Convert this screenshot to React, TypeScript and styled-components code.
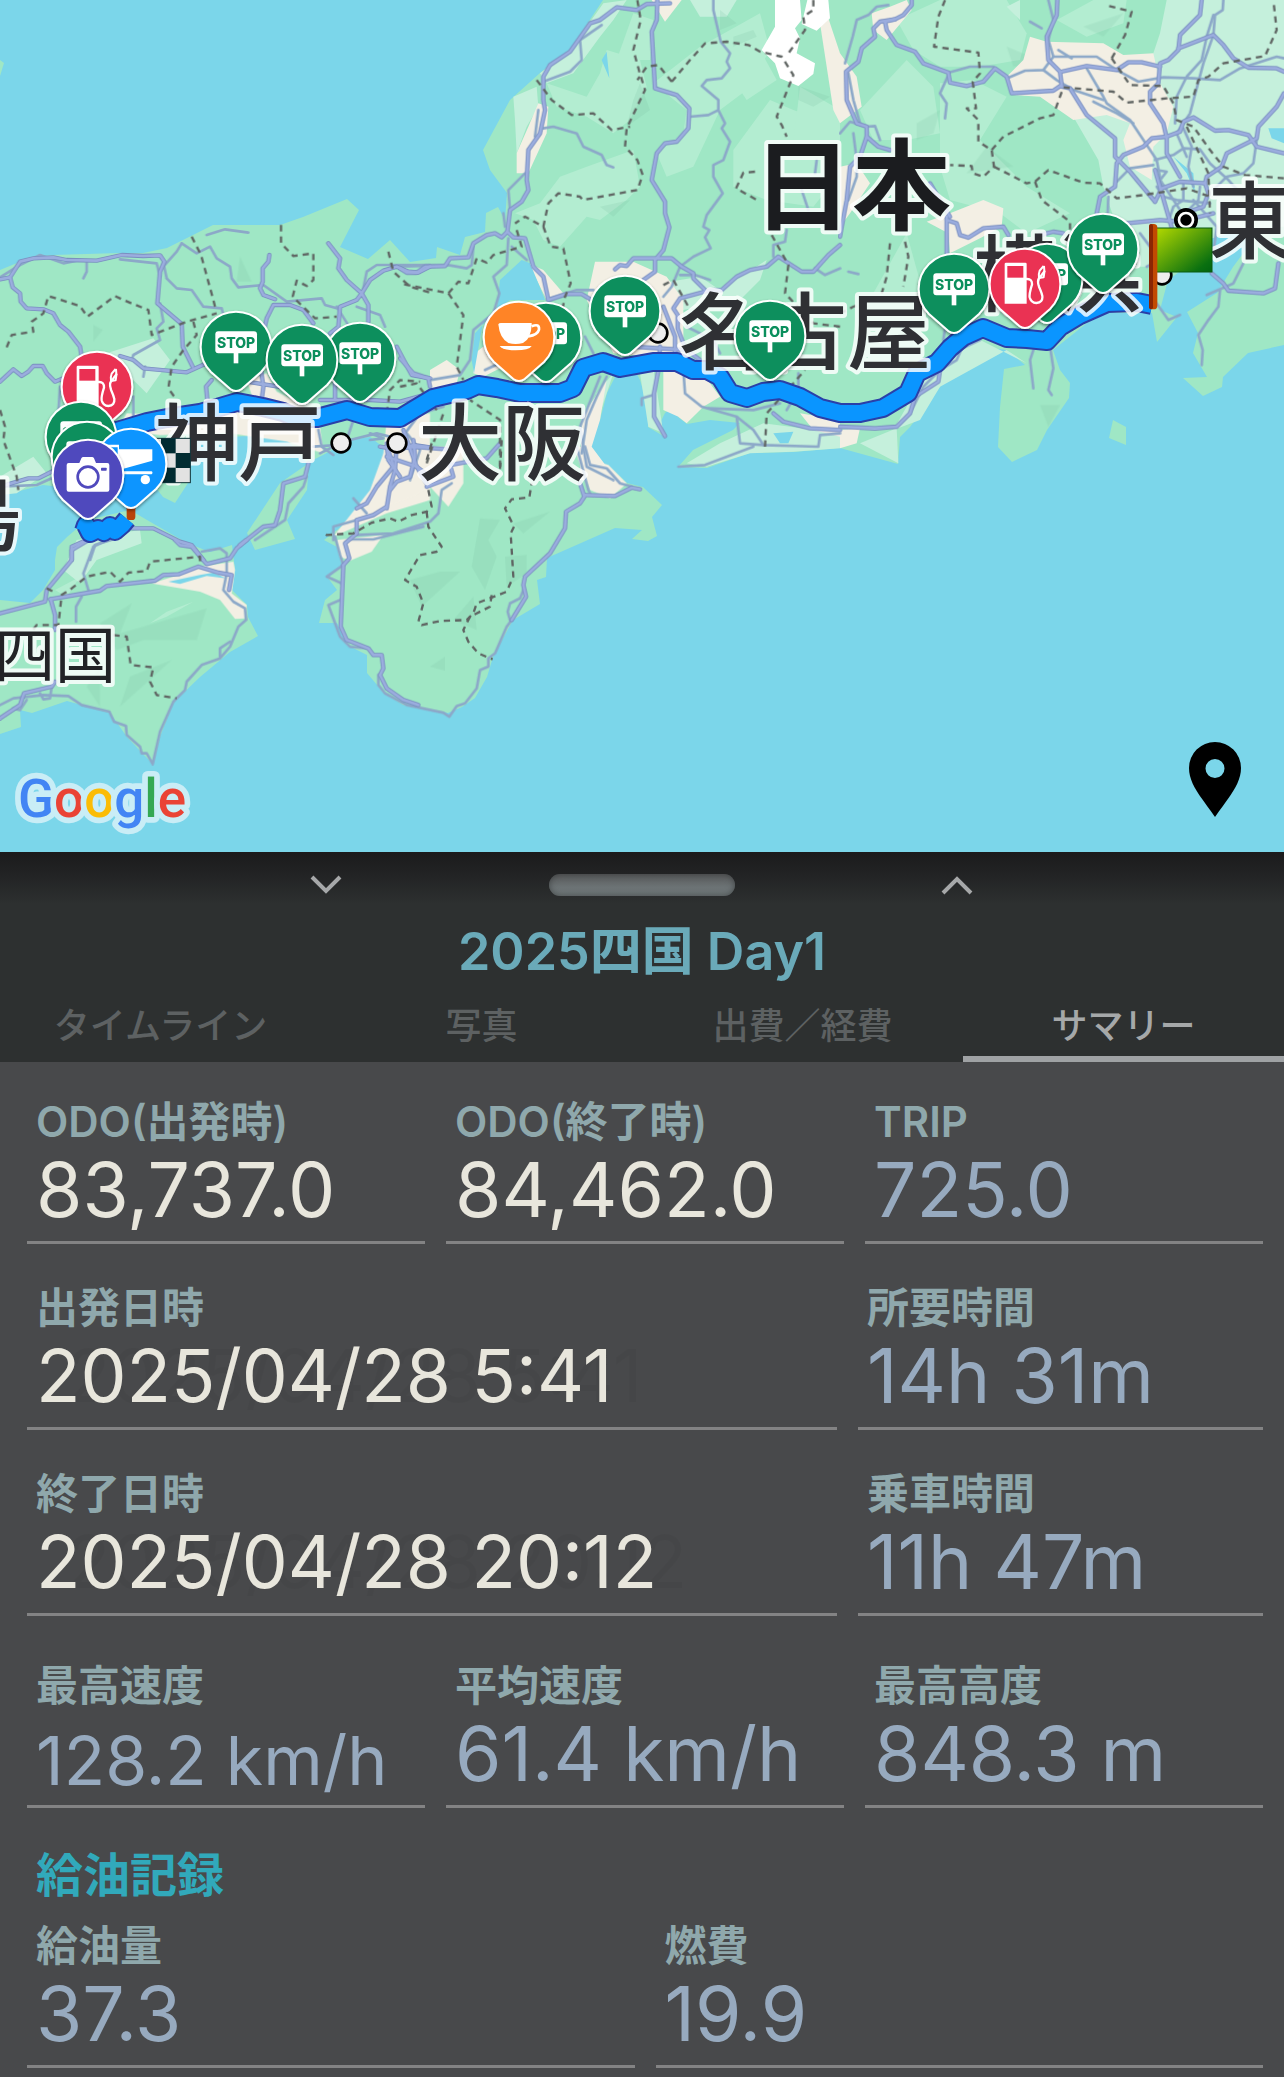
import React, { useState } from 'react';
import styled, { createGlobalStyle } from 'styled-components';

const FONT = `Inter, "Noto Sans CJK JP", sans-serif`;

const GlobalStyle = createGlobalStyle`
  * { box-sizing: border-box; }
  body { margin: 0; background: #48494b; font-family: ${FONT}; }
  button, input { font: inherit; color: inherit; border: 0; background: none; padding: 0; margin: 0; }
`;

/* ---------- map data: each sheet lists its lines in its own coordinates ---------- */

type Sheet = {
  x: number;
  y: number;
  hill?: string[];
  shade?: string[];
  pale?: string[];
  urban?: string[];
  snow?: string[];
  water?: string[];
  major: string[];
  minor: string[];
  border: string[];
};

const sheets: Sheet[] = [
  {
    x: 0,
    y: 600,
    pale: ['320,460 460,415 510,480 440,580 360,500', '0,830 100,770 140,820 50,880 0,885', '190,1110 230,1020 420,990 425,1030 290,1080 240,1150'],
    shade: ['720,170 755,245 710,245', '280,375 308,390 280,425'],
    urban: ['740,540 800,520 830,575 900,610 960,680 970,760 860,725 690,700 480,705 350,690 380,640 640,650 760,600', '1160,660 1290,640 1290,900 1160,940 1000,1010 1110,870 1150,760'],
    major: [
      '0,238 30,232 60,185 100,175 160,172 200,180 290,182 365,165 430,168 480,166 493,185 480,215 472,310 545,372 548,440 578,500',
      '30,232 38,262 60,280 62,305 80,325 130,328 160,340 180,375 205,395 240,440 245,470',
      '0,545 40,508 65,528 85,515 100,498 128,498 140,520 165,545 190,535',
      '360,468 400,480 430,505 560,517 620,490',
      '808,165 805,185 788,205 788,245 780,265 790,285 825,298',
      '985,130 1020,175 1015,205 1040,240 1085,280 1105,315 1105,365',
      '1290,200 1255,218 1225,215 1190,200 1150,212 1110,240 1085,280 1070,300 1020,320 1015,380 990,400',
      '940,370 910,330 870,315 820,315 800,355 790,400',
      '0,860 85,835 115,835 165,810',
      '395,985 460,985 540,1025 575,1035 610,1080',
      '265,1018 215,1040 215,1080',
      '635,540 618,560 622,600',
      '780,490 790,560 785,600',
      '740,545 900,570',
      '1190,440 1235,525 1290,535',
      '1290,580 1200,605 1110,600 960,600',
      '1140,740 1200,750 1240,735 1290,742',
      '1160,730 1165,780 1200,830',
      '1210,690 1250,800 1290,830',
      '1005,520 1005,600',
    ],
    minor: [
      '250,235 260,215 260,182',
      '480,230 470,190 360,178',
      '0,232 60,195 120,165 190,190 230,182',
      '490,200 530,155 545,130',
      '500,235 530,265 575,270 610,320 665,325 670,345',
      '490,190 500,235',
      '545,130 590,160 630,140 650,175 690,200 695,235 715,262 790,255 860,305 965,295 975,315 1010,325',
      '620,105 675,88 745,98',
      '480,310 490,365 470,385 480,420 400,465 395,480',
      '435,500 430,530',
      '1085,290 1100,215 1130,195 1290,195',
      '1070,320 1140,345 1155,380',
      '1010,320 1060,400',
      '0,860 110,855 165,830',
      '940,740 1010,735',
      '960,760 1040,720 1060,660',
      '1050,720 1130,700 1210,720',
      '1110,700 1150,715 1110,720',
      '955,690 965,740 1000,765',
      '270,1080 285,1035 350,1015',
      '400,590 400,650',
      '175,640 180,560',
    ],
    border: [
      '575,110 603,165 640,300 645,320',
      '843,75 843,130 880,168 940,160 940,240 920,258 890,242 878,290 945,355 1010,350',
      '20,442 35,405 100,395 95,365 130,340 145,288 240,318 262,350 345,288 370,300 445,330 455,405 560,365 650,340',
      '580,365 590,405 550,450 515,500 505,565 530,600',
      '0,630 15,680 10,720 50,830 55,870',
      '1165,155 1180,215 1230,260 1290,278',
      '1160,640 1170,570 1200,540 1260,545',
    ],
  },
  {
    x: 1200,
    y: 0,
    hill: [
      '345,640 420,610 480,530 560,500 700,450 720,560 680,600 600,660 560,650 480,740 430,720 400,660',
      '440,250 560,290 600,220 620,150 720,180 740,260 690,360 640,400 560,350 470,320',
      '760,250 900,140 1080,40 1110,150 1040,270 960,330 880,500 800,530 770,460 850,400 860,330',
      '700,40 760,60 750,180 650,180',
      '1000,450 1110,300 1180,330 1320,380 1320,520 1240,620 1100,600 1000,560',
      '1200,260 1320,330 1320,420 1180,430',
      '960,180 1080,150 1130,240 1040,300',
    ],
    shade: ['720,250 750,330 680,380 700,300', '1000,110 1060,90 1070,110 1000,140', '1195,258 1290,290 1240,320 1195,300', '600,620 690,600 640,650', '960,30 1010,70 960,90'],
    pale: [
      '420,220 510,150 610,10 680,0 640,60 600,110 520,220 440,250',
      '340,290 410,260 415,320 380,380 350,460 345,360',
      '780,850 900,830 960,870 1100,780 1080,840 990,930 900,920 800,940',
      '870,0 1010,0 980,50 900,50',
      '860,1390 960,1330 1090,1270 1320,1300 1320,1345 1180,1355 1050,1360 920,1400',
      '720,1120 760,1100 790,1300 745,1280',
      '590,1180 640,1120 600,1240 560,1300',
    ],
    urban: [
      '415,310 445,320 440,400 385,520 350,520 350,460 385,380',
      '585,785 700,785 800,830 850,900 850,1040 870,1080 640,1060 560,900',
      '385,790 430,810 490,880 440,900',
      '90,1110 140,1080 180,1110 170,1150 100,1180 90,1150',
      '225,1060 300,1000 330,1090 250,1130 220,1120',
      '790,1090 900,1110 960,1190 910,1220 860,1270 835,1250 790,1230',
      '1200,1240 1320,1260 1320,1310 1240,1290',
      '1260,70 1285,55 1320,160 1320,370 1300,330',
      '755,0 845,0 795,65',
      '545,1250 620,1140 600,1260 575,1340 620,1400 650,1440 540,1440',
    ],
    snow: ['1125,0 1200,0 1205,60 1185,85 1200,115 1190,160 1245,190 1240,222 1195,258 1140,235 1125,190 1085,150 1125,80', '1222,0 1285,0 1290,55 1250,92 1205,72'],
    water: ['365,780 390,790 415,850 435,900 330,900 250,960 222,1120 215,1080 225,1000 290,930 300,840', '605,180 620,155 628,235', '1120,1300 1180,1295 1165,1330 1140,1330'],
    major: [
      '810,10 740,12 710,30 650,22 600,60 570,70 510,155 450,195 430,230 430,300 435,330 420,400 385,450 380,540 385,570 365,605 330,630 322,695',
      '322,695 305,712 285,700 260,705 220,730 205,772 150,775 135,798 75,800 50,818 20,818 0,805',
      '322,695 340,712 375,715 400,800 430,830 445,900',
      '445,900 500,882 545,882 575,900',
      '772,0 770,60 755,95 765,265 830,285 868,325 865,385 830,425 795,430 770,460 755,540 795,605 795,640 808,682 790,750 765,780 765,815 730,840',
      '645,808 660,795 680,798 700,775 815,775 845,800 880,820 880,835 915,870',
      '1320,735 1285,765 1240,815 1205,815 1135,770 1100,800 1050,810 1010,830 965,870 925,872 840,895 820,925 833,945 833,985 850,1030',
      '825,1060 825,1010 790,920',
      '780,1040 775,1110 762,1180 762,1250 795,1308',
      '0,1075 40,1120 85,1135 90,1160',
      '1120,1240 1150,1265 1230,1285 1320,1290',
      '700,1040 860,1050 900,1080',
    ],
    minor: [
      '430,245 510,215 545,180 540,120 605,75',
      '430,385 460,380 530,400 550,440 605,465 620,495 640,502',
      '870,350 925,345 955,330 955,300 905,258 920,240 965,235 990,205 980,185 990,160 962,125 940,30 940,0',
      '955,330 975,370 965,385 990,425 970,480 940,495 940,530 968,580 920,645 910,680 928,690 915,712 932,745 880,770 840,800 815,860 790,890',
      '375,520 325,570 330,630',
      '405,410 415,330',
      '310,640 315,680',
      '325,715 320,795 280,830 298,880 280,940 220,990 210,1080 180,1125 90,1140',
      '335,740 380,780',
      '220,740 215,795 200,805 145,795 0,800',
      '840,825 885,825 930,840',
      '1195,1120 1195,1170 1160,1230',
      '850,1110 855,1180 905,1220 1010,1250 1060,1290 1090,1335 1255,1340 1260,1305 1320,1300',
      '925,1225 1060,1230 1140,1210',
      '835,1400 915,1395 1060,1340',
      '1010,1250 1020,1330 1090,1335',
      '1250,480 1245,520',
      '1205,570 1225,630',
      '1160,690 1155,725 1120,735 1120,770',
      '1320,805 1275,825 1245,805',
      '725,1215 725,1195 760,1185',
      '555,1010 580,1060',
      '450,895 530,870 580,870',
      '255,1110 320,1080',
      '620,1130 590,1190 560,1260 545,1360',
      '600,1130 540,1280 560,1400 640,1440',
      '860,980 940,1020 960,1060',
      '0,1320 60,1240 130,1220',
      '20,1300 60,1350 30,1440',
    ],
    border: [
      '712,0 722,60 700,150 718,215 735,270 680,385 675,440 712,480 728,525 712,570 548,600 540,590 475,580 445,610 430,680 375,650 345,670',
      '410,240 455,300 515,345 580,340 635,390 690,380',
      '430,680 452,740 490,745 512,850 495,890 480,960',
      '815,245 775,195 740,200 712,240',
      '815,245 870,180 915,130 980,125 1045,135 1080,155 1145,170 1180,225 1150,300 1130,350 1145,375 1160,410',
      '1240,0 1240,30 1210,50 1215,90 1165,160',
      '1065,515 1030,518 1008,565 1080,605',
      '1115,705 1165,795 1155,880 1240,970 1320,980',
      '350,690 365,740 280,765 260,788 230,775 205,850 175,845 145,880 0,850',
      '145,880 190,945 170,1100 190,1140',
      '790,855 820,840 865,920',
      '1095,1340 1100,1240 1215,1110',
      '300,1400 300,1260 210,1200',
      '80,1390 130,1240',
      '0,1160 50,1150 110,1230',
    ],
  },
  {
    x: 2520,
    y: 0,
    hill: [
      '170,60 300,0 500,0 560,100 540,180 420,200 300,200 220,150',
      '300,250 400,240 500,290 420,420 560,560 690,640 560,700 480,640 330,600 300,500',
      '60,330 200,180 280,260 300,400 200,420 100,420',
      '650,60 760,0 860,0 850,70 740,110',
      '100,880 200,700 250,880',
    ],
    shade: ['230,370 300,330 280,400 230,420', '500,140 620,190 520,200', '600,1215 660,1215 625,1280', '730,80 850,40 790,110', '440,440 520,500 380,520'],
    pale: ['980,0 1332,0 1332,680 1200,690 1100,720 1080,800 900,800 820,650 790,560 775,480 700,350 850,340 940,160 960,100', '60,1330 170,1285 175,1390', '380,1000 560,1090 500,1050 300,1160 240,1260 160,1290 240,1150', '500,20 540,0 540,60'],
    urban: [
      '570,110 620,125 790,130 850,165 940,160 960,250 1000,320 980,400 940,440 935,540 870,500 850,420 870,370 800,345 700,360 600,290 520,285 500,230 550,180',
      '150,20 200,0 215,30 190,60 140,120 100,90 95,40',
      '0,160 50,230 65,320 0,370',
      '260,665 330,640 430,600 490,625 485,680 420,715 330,760 325,700',
      '0,500 50,490 90,550 30,640 0,680',
      '0,1290 60,1285 50,1330 0,1345',
    ],
    water: ['1285,385 1332,385 1332,430 1295,415', '1000,470 1040,520 1065,580 1060,520'],
    major: [
      '215,0 215,15 190,45 165,58 135,65 140,90 170,135 225,155 250,190 325,218 330,248 380,258 430,245 465,205 500,230 515,280 640,272 665,255 660,215 625,180 620,110 650,45 652,0',
      '165,58 120,65 100,85 105,110 65,145 55,185 18,215 20,300 50,370 80,380 80,410 60,470 30,500 20,600 5,680 0,710',
      '80,410 115,440 150,450',
      '665,215 740,198 830,210 865,187 905,187 960,200',
      '665,260 690,265 740,345 825,415 825,470 870,515 945,605',
      '1085,0 1080,45 1020,105 1015,150 985,180 960,190 955,250 930,275 930,310 970,370 978,405',
      '1015,145 1120,105 1150,135 1180,175 1225,203 1310,205 1332,215',
      '1332,280 1310,320 1255,380 1250,415 1160,460 1145,500 1100,530 1095,550',
      '1332,460 1250,440 1225,405 1165,390 1125,392 1060,352 1030,365 1020,395 980,410 935,415 910,440 850,465 830,490 825,560 780,590 770,640',
      '980,410 980,460 1020,530',
      '945,605 965,565 1020,545 1095,550 1105,580 1090,620 1030,640',
      '1115,820 1150,850 1165,872 1270,880 1305,865 1315,790',
      '860,670 960,660 1020,665 1120,640',
      '320,660 350,670 360,705 385,713 430,685 490,680 505,705',
      '320,650 320,760',
      '600,705 640,695 670,700',
      '0,1280 105,1285 170,1280 210,1240 225,1190 295,1145 300,1110',
      '945,510 1000,700 960,760',
      '270,550 330,650',
    ],
    minor: [
      '145,15 110,20 85,45 50,60 38,110 15,190',
      '0,400 30,365 80,380 105,378 120,420',
      '40,400 50,480 50,530 25,600',
      '25,220 40,300 60,370',
      '325,218 390,200 460,200',
      '325,225 300,280 320,310 315,355',
      '500,235 555,212 610,210 640,170 770,170 830,210 895,245 970,232 1060,235 1140,240 1200,205 1310,170 1332,175',
      '610,210 650,240 700,270 790,300',
      '740,205 790,290 800,310 870,360 950,480 965,560',
      '570,65 605,85',
      '625,0 640,60 625,120 640,170',
      '655,150 695,175',
      '1150,0 1148,30 1125,45 1120,105 1090,190 1050,340 1010,400 1040,470',
      '1120,45 1100,110 1085,180 1040,230 1010,290 1005,370',
      '760,305 830,340 880,370',
      '1030,385 1055,440 1045,500 1060,560',
      '945,480 1000,465 1030,445 1080,448 1110,490 1165,540 1210,590',
      '1250,420 1240,490 1210,520 1160,530 1120,570',
      '1080,560 1075,600 1035,640',
      '830,545 870,505 940,495',
      '805,590 803,640',
      '1030,550 1030,600 1000,620 990,650',
      '950,560 970,590 1010,600 1110,610',
      '950,510 980,515 960,540 1000,600 1040,660',
      '1060,600 1130,680 1120,760',
      '1140,870 1135,920 1105,960 1075,1005 1088,1050 1085,1095',
      '1210,790 1180,850 1100,885',
      '950,910 985,960 1020,945',
      '900,700 960,780 920,800',
      '580,1050 570,1080 580,1165',
      '630,1040 640,1105 625,1170 635,1185',
      '420,1020 365,1045 350,1080 300,1110 250,1160 210,1240',
      '25,815 55,822',
      '320,950 310,1020',
    ],
    border: [
      '315,0 295,50 282,140 415,158 420,220 398,245 405,300 408,325 380,325 415,360 415,425 455,450 462,500 430,530 398,520 395,498 330,495',
      '455,450 490,410 600,355 640,345 670,262 820,275 860,308 980,295 1060,290 1075,240 1105,230 1150,190 1275,168 1310,90 1300,0',
      '815,175 855,105 875,35 795,15',
      '815,175 870,255 970,258 1000,310 1010,360 1060,380 1110,450 1150,500 1215,525 1332,535',
      '462,500 560,550 585,545 625,510 730,548 780,550 830,595 910,585 1040,565 1110,590',
      '585,545 605,600 690,665 690,690',
      '150,730 140,830 125,880',
      '195,725 205,770 190,860',
      '1040,380 1105,520 1110,640',
      '0,940 40,920 100,900',
    ],
  },
  {
    x: 0,
    y: 1620,
    hill: ['450,250 500,215 580,185 500,230', '165,150 240,110 200,170'],
    shade: ['300,250 395,190 360,280 620,205 590,300 430,300 350,330', '360,500 390,410 515,360', '260,440 300,380 300,500'],
    urban: ['455,130 540,103 600,80 700,65 705,90 695,160 740,195 735,235 705,237 660,180 600,155'],
    water: ['505,125 600,105 640,98 680,115 620,108 540,132'],
    major: [
      '265,0 215,30 215,60 140,150 135,185 0,220',
      '150,178 300,152 320,138 465,122 490,105 535,103 595,80 655,98 695,105 687,150',
      '152,178 165,225 165,270',
      '525,0 540,15 575,20 620,72 690,55 710,25 740,0',
      '0,535 60,495 72,460 155,440 165,425',
    ],
    minor: [
      '320,0 280,20 250,100 265,150',
      '245,170 228,200 228,245',
      '605,35 660,25 680,40 680,100 670,150 700,185 735,205 738,240 715,260 690,320 660,355 605,375 560,425 555,450 520,485 480,575 458,672 440,640 425,640 420,620 380,585 378,558 342,545 328,515 245,495 205,468 130,465 40,475 0,495',
      '660,350 660,325 690,305',
      '155,440 150,475 130,478 120,460',
      '80,480 60,510 40,505',
    ],
    border: [
      '100,268 110,255 175,255 185,165 215,145 260,110 330,95 360,125 385,98 440,93 450,65 600,50 600,75',
      '140,145 160,155',
      '340,285 380,290 392,375 460,382 450,425 470,465 530,475',
    ],
  },
  {
    x: 720,
    y: 1320,
    shade: ['720,235 780,240 745,300 770,350 735,450 695,380', '795,350 860,345 860,400 800,440', '510,420 600,395 660,395 545,500', '640,540 700,470 710,570', '570,680 615,650 615,692', '820,250 930,215 850,280'],
    urban: ['440,20 670,20 670,130 625,200 570,140 520,170 440,200 330,240 400,160 430,90', '290,300 430,285 395,335 330,362 300,350', '1050,60 1105,75 1160,130 1110,175 1050,150 1000,20 1050,20'],
    major: [
      '0,315 70,260 105,255 120,210 130,130 195,110 205,70',
      '310,375 328,355 315,310 350,280 350,240 400,225 440,200',
      '310,375 302,560 320,600 385,625 400,645 425,645 430,685 420,705 440,745 490,780 535,795',
      '1020,130 1033,170 1020,190 978,215 975,265 930,340 855,410 850,435 858,470 815,540',
      '1033,165 1125,168 1175,143 1200,148',
      '440,20 455,60 460,80 410,140 380,190 350,205',
      '468,40 465,90 450,140 440,205',
      '520,0 525,50 510,110 470,125 450,150',
      '440,20 540,22 620,28',
      '780,10 740,55 630,75 640,110 560,140',
      '440,50 530,80 560,130',
    ],
    minor: [
      '340,175 380,220',
      '280,300 280,260 350,240',
      '285,290 300,345 310,375',
      '350,285 460,280 570,245 595,220 605,150 635,130',
      '330,298 400,298 550,260',
      '310,375 260,410 305,430',
      '300,480 265,495 300,590 330,620 385,625',
      '415,705 415,735 435,760 500,795 610,818 628,830 650,798 675,790 710,745 720,690 745,680 745,655 765,640 800,560 815,540',
      '850,450 840,475 810,490 803,515 810,540',
      '1035,20 1050,75 1100,85 1140,130 1175,140',
      '1010,20 1045,150 1050,160',
      '200,110 190,140 145,190 135,240 45,300',
    ],
    border: [
      '565,150 575,200 560,215 515,225 475,245 450,235 395,248 340,280 260,285 250,275',
      '560,215 565,260 605,320 590,335 540,345 495,420 530,440 550,490 535,545 545,555 600,543 680,540 700,520 710,490 800,455 820,410 812,280 822,260 795,205 815,178 868,172 875,130',
      '755,465 750,500 690,530 670,570 685,605 715,640 758,658',
      '575,10 560,60',
      '785,0 780,90',
    ],
  },
];

const land = [
  '0,270 17,263 30,257 53,255 120,253 143,253 167,248 213,225 280,225 303,217 347,199 359,210 340,247 368,259 390,240 410,262 436,258 437,247 460,255 465,237 485,232 486,213 498,207 505,220 507,193 490,170 483,150 510,100 540,73 570,50 603,0 1284,0 1284,345 1248,353 1223,377 1222,387 1203,396 1183,378 1207,377 1193,353 1198,333 1187,312 1217,293 1233,267 1253,240 1240,232 1213,233 1200,257 1168,280 1160,310 1177,317 1157,342 1152,313 1107,313 1087,323 1053,350 1060,370 1070,383 1069,398 1047,430 1037,450 1012,462 998,447 1000,407 1004,369 1025,365 1007,350 983,347 957,363 940,387 910,427 900,437 898,464 840,448 793,452 750,453 707,468 678,467 693,450 733,430 740,423 710,420 687,424 678,417 677,403 665,413 660,423 665,437 648,427 648,407 640,380 633,367 617,373 607,393 600,420 590,437 590,460 608,465 627,483 643,487 662,505 652,517 657,536 648,541 632,539 642,530 615,528 547,558 546,577 537,580 540,604 513,620 493,657 487,677 475,698 462,707 448,713 403,705 383,692 367,673 367,655 347,645 337,623 319,623 325,600 337,590 328,578 342,565 337,547 324,540 350,520 373,493 383,470 387,457 383,447 370,437 350,440 323,455 307,463 287,440 263,435 230,437 190,440 190,480 175,503 163,497 150,480 120,500 90,490 43,485 0,496',
  '55,560 57,547 67,537 87,520 130,510 147,520 187,543 210,552 232,545 235,570 232,590 247,605 248,617 258,636 230,652 200,677 173,703 160,737 153,764 142,753 127,737 110,713 67,701 32,713 20,710 21,727 0,734 0,600 30,603 43,590 55,570',
  '309,463 280,483 247,533 255,550 295,539 287,520 307,490',
  '1113,420 1126,427 1126,445 1109,438',
  '0,60 4,63 0,76',
];

const route = [
  '1152,305 1137,302 1107,303 1080,315 1060,327 1047,341 1027,339 1007,338 983,328 963,337 950,348 937,363 917,373 908,393 883,408 860,413 840,413 820,408 800,397 780,390 763,392 747,398 730,393 720,377 707,370 693,370 677,362 653,362 620,368 603,362 583,368 573,388 560,393 520,393 497,388 478,385 467,390 433,398 413,410 400,418 370,417 347,410 317,418 297,418 283,412 263,407 237,402 220,407 200,413 167,418 147,422 127,428 110,433 90,450',
  '127,519 122,525 115,531 110,526 104,532 98,529 90,533 86,525 84,531',
];

/* ---------- map drawing ---------- */

const MapArea = styled.section`
  position: relative;
  background: #7bd6ea;
`;

const MapSvg = styled.svg`
  display: block;
  width: 100%;
  height: auto;
`;

const LocateButton = styled.button`
  position: absolute;
  right: 43px;
  bottom: 35px;
  width: 52px;
  height: 75px;
  cursor: pointer;
  svg { display: block; width: 100%; height: 100%; }
`;

type AreaKey = 'hill' | 'shade' | 'pale' | 'urban' | 'snow' | 'water';

const Areas = ({ of, fill, opacity = 1 }: { of: AreaKey; fill: string; opacity?: number }) => (
  <g fill={fill} opacity={opacity}>
    {sheets.map((s, i) => (
      <g key={i} transform={`translate(${s.x} ${s.y})`}>
        {(s[of] ?? []).map((p) => <polygon key={p} points={p} />)}
      </g>
    ))}
  </g>
);

const Lines = ({ of, stroke, width, dash }: { of: 'major' | 'minor' | 'border'; stroke: string; width: number; dash?: string }) => (
  <g fill="none" stroke={stroke} strokeWidth={width} strokeLinejoin="round" strokeLinecap={dash ? 'butt' : 'round'} strokeDasharray={dash}>
    {sheets.map((s, i) => (
      <g key={i} transform={`translate(${s.x} ${s.y})`}>
        {s[of].map((p) => <polyline key={p} points={p} />)}
      </g>
    ))}
  </g>
);

const PlaceLabel = ({ x, y, size = 84, weight = 500, color = '#2f3034', children }: { x: number; y: number; size?: number; weight?: number; color?: string; children: string }) => (
  <text
    x={x * 3}
    y={y * 3}
    fontSize={size * 3}
    fontWeight={weight}
    fontFamily='"Noto Sans CJK JP", sans-serif'
    fill={color}
    stroke="rgba(255,255,255,0.82)"
    strokeWidth={24}
    strokeLinejoin="round"
    paintOrder="stroke"
  >
    {children}
  </text>
);

const CityDot = ({ x, y }: { x: number; y: number }) => (
  <circle cx={x * 3} cy={y * 3} r={28} fill="#eeeeee" stroke="#000" strokeWidth={8} />
);

type PinKind = 'stop' | 'fuel' | 'cafe' | 'camera' | 'cart';

const pinColor: Record<PinKind, string> = {
  stop: '#0b8f5d',
  fuel: '#ea3053',
  cafe: '#ff8427',
  camera: '#5049bd',
  cart: '#0a95ff',
};

const glyphs: Record<PinKind, React.ReactNode> = {
  stop: (
    <>
      <rect x={-62} y={-47} width={125} height={66} rx={9} fill="#fff" />
      <rect x={-7} y={15} width={14} height={34} fill="#fff" />
      <text x={0} y={2} textAnchor="middle" fontSize={42} fontWeight={800} fontFamily="Inter, sans-serif" fill="#0b8f5d">STOP</text>
    </>
  ),
  fuel: (
    <>
      <path d="M-61 59V-60q0-4 4-4H1q4 0 4 4V59Z" fill="#fff" />
      <rect x={-53} y={-54} width={48} height={35} fill="#ea3053" />
      <path d="M5-15Q22-16 21 2Q12 30 14 40Q18 57 34 57Q54 56 52 36Q50 26 42 8Q34-14 48-24L58-38" fill="none" stroke="#fff" strokeWidth={7} strokeLinecap="round" />
      <path d="M56-54L44-40Q40-30 42-18L56-20Q60-36 57-54" fill="none" stroke="#fff" strokeWidth={6} strokeLinejoin="round" />
    </>
  ),
  cafe: (
    <>
      <path d="M-62-38Q-60-42-54-42H38V-36Q36 6 12 18Q-10 24-32 18Q-58 4-62-38Z" fill="#fff" />
      <path d="M38-32Q62-42 60-22Q56-6 28-2" fill="none" stroke="#fff" strokeWidth={8} />
      <path d="M-58 27H38Q30 40-10 40Q-48 40-58 27Z" fill="#fff" />
    </>
  ),
  camera: (
    <>
      <path d="M-64-30q0-6 6-6h32l6-14q2-4 6-4H12q4 0 6 4l6 14H58q6 0 6 6V44q0 6-6 6H-58q-6 0-6-6Z" fill="#fff" />
      <circle cx={0} cy={6} r={31} fill="#fff" stroke="#5049bd" strokeWidth={8} />
      <rect x={39} y={-22} width={17} height={9} rx={2} fill="#5049bd" />
    </>
  ),
  cart: (
    <>
      <path d="M-90-58H-36V-44H64V-10L-28 16L-40-20V-50H-90Z" fill="#fff" />
      <rect x={-50} y={22} width={114} height={9} rx={3} fill="#fff" />
      <circle cx={43} cy={47} r={14} fill="#fff" />
    </>
  ),
};

const Pin = ({ kind, x, y }: { kind: PinKind; x: number; y: number }) => (
  <g transform={`translate(${x * 3} ${y * 3})`}>
    <path
      d="M0 132Q-9 132-17 126L-75 75A106 106 0 1 1 75 75L17 126Q9 132 0 132Z"
      fill={pinColor[kind]}
      stroke="#fff"
      strokeWidth={6}
      filter="url(#pinShadow)"
    />
    {glyphs[kind]}
  </g>
);

const pins: { kind: PinKind; x: number; y: number }[] = [
  { kind: 'stop', x: 236, y: 347 },
  { kind: 'stop', x: 360, y: 358 },
  { kind: 'stop', x: 302, y: 360 },
  { kind: 'fuel', x: 97, y: 387 },
  { kind: 'stop', x: 81, y: 437 },
  { kind: 'stop', x: 87, y: 457 },
  { kind: 'cart', x: 131, y: 464 },
  { kind: 'camera', x: 88, y: 475 },
  { kind: 'stop', x: 546, y: 338 },
  { kind: 'cafe', x: 519, y: 337 },
  { kind: 'stop', x: 625, y: 311 },
  { kind: 'stop', x: 770, y: 336 },
  { kind: 'stop', x: 954, y: 289 },
  { kind: 'stop', x: 1047, y: 279 },
  { kind: 'fuel', x: 1025, y: 284 },
  { kind: 'stop', x: 1103, y: 249 },
];

const StartFlag = () => (
  <g>
    <rect x={3468} y={684} width={168} height={132} fill="url(#flag)" stroke="#0a5a10" strokeWidth={3} />
    <rect x={3447} y={672} width={25} height={256} rx={11} fill="#c24a02" />
    <rect x={3447} y={672} width={12} height={256} rx={6} fill="#8a2604" />
  </g>
);

const GoalFlag = () => (
  <g>
    <rect x={380} y={1310} width={26} height={250} rx={10} fill="#b8430a" />
    <rect x={395} y={1315} width={176} height={133} fill="#e2e2e2" stroke="#0c3237" strokeWidth={3} />
    {[0, 1, 2].flatMap((row) =>
      [0, 1, 2, 3]
        .filter((col) => (row + col) % 2 === 0)
        .map((col) => <rect key={`${row}${col}`} x={395 + col * 44} y={1315 + row * 44} width={44} height={45} fill="#012b31" />),
    )}
  </g>
);

const GOOGLE: [string, string][] = [
  ['G', '#4285f4'],
  ['o', '#ea4335'],
  ['o', '#fbbc05'],
  ['g', '#4285f4'],
  ['l', '#34a853'],
  ['e', '#ea4335'],
];

const RouteMap = () => (
  <MapArea aria-label="地図">
    <MapSvg viewBox="0 0 3852 2556" role="img">
      <defs>
        <filter id="pinShadow" x="-20%" y="-20%" width="140%" height="140%">
          <feDropShadow dx="0" dy="5" stdDeviation="5" floodColor="#000" floodOpacity="0.45" />
        </filter>
        <linearGradient id="flag" x1="0" y1="0" x2="1" y2="1">
          <stop offset="0" stopColor="#b4d900" />
          <stop offset="0.85" stopColor="#0a7010" />
          <stop offset="1" stopColor="#006410" />
        </linearGradient>
      </defs>
      <rect width={3852} height={2556} fill="#7bd6ea" />
      <g transform="scale(3)" fill="#9fe7c5">
        {land.map((p) => <polygon key={p} points={p} />)}
      </g>
      <Areas of="hill" fill="#b3edd1" />
      <Areas of="pale" fill="#c5f0dc" />
      <Areas of="shade" fill="#7fc4a6" opacity={0.2} />
      <Areas of="urban" fill="#f3efe4" />
      <Areas of="snow" fill="#ffffff" />
      <Areas of="water" fill="#7bd6ea" />
      <Lines of="minor" stroke="#8ca8c8" width={8} />
      <Lines of="major" stroke="#7a8fc0" width={13} />
      <Lines of="major" stroke="#9badde" width={8} />
      <Lines of="border" stroke="#5f6462" width={7} dash="19 15" />
      <g transform="scale(3)" fill="none" strokeLinejoin="round">
        {route.map((p) => <polyline key={p} points={p} stroke="#2a3fa8" strokeWidth={20} />)}
        {route.map((p) => <polyline key={p} points={p} stroke="#0a95ff" strokeWidth={16} />)}
      </g>
      <CityDot x={341} y={443} />
      <CityDot x={397} y={443} />
      <CityDot x={658} y={333} />
      <CityDot x={1162} y={275} />
      <g>
        <circle cx={3558} cy={660} r={36} fill="#000" />
        <circle cx={3558} cy={660} r={25} fill="#fff" />
        <circle cx={3558} cy={660} r={17} fill="#000" />
      </g>
      <PlaceLabel x={753} y={222} size={99} weight={700} color="#1b1c1f">日本</PlaceLabel>
      <PlaceLabel x={154} y={474}>神戸</PlaceLabel>
      <PlaceLabel x={418} y={474}>大阪</PlaceLabel>
      <PlaceLabel x={679} y={363}>名古屋</PlaceLabel>
      <PlaceLabel x={973} y={305}>横浜</PlaceLabel>
      <PlaceLabel x={1208} y={252}>東</PlaceLabel>
      <PlaceLabel x={-62} y={544}>島</PlaceLabel>
      <PlaceLabel x={-6} y={678} size={61} weight={400} color="#222326">四国</PlaceLabel>
      <GoalFlag />
      {pins.map((p, i) => <Pin key={i} {...p} />)}
      <StartFlag />
      <text x={54} y={2450} fontFamily="Roboto, sans-serif" fontSize={159} fontWeight={500} stroke="#c9edf6" strokeWidth={34} strokeLinejoin="round" paintOrder="stroke">
        {GOOGLE.map(([letter, fill], i) => <tspan key={i} fill={fill}>{letter}</tspan>)}
      </text>
    </MapSvg>
    <LocateButton type="button" aria-label="現在地">
      <svg viewBox="0 0 52 75">
        <path fillRule="evenodd" d="M26 0A26 26 0 0 1 52 26C52 42 40 55 26 75C12 55 0 42 0 26A26 26 0 0 1 26 0ZM26 17a9 9 0 1 0 0 19a9 9 0 1 0 0-19Z" fill="#000" />
      </svg>
    </LocateButton>
  </MapArea>
);

/* ---------- sheet header ---------- */

const SheetHeader = styled.header`
  background: linear-gradient(#1b1b1c 0, #222324 22px, #2d3030 52px);
`;

const HandleRow = styled.div`
  display: grid;
  grid-template-columns: 1fr 186px 1fr;
  align-items: center;
  height: 66px;
`;

const Handle = styled.button`
  height: 22px;
  border-radius: 11px;
  background: linear-gradient(#58595a, #6c7375 60%, #6f7778);
  box-shadow: inset 0 0 6px rgba(50, 52, 54, 0.7);
`;

const ChevronButton = styled.button<{ $side: 'left' | 'right' }>`
  display: flex;
  justify-self: ${(p) => (p.$side === 'left' ? 'end' : 'start')};
  margin: 0 ${(p) => (p.$side === 'left' ? 207 : 0)}px 0 ${(p) => (p.$side === 'left' ? 0 : 206)}px;
  color: #a6a8a9;
  svg { width: 32px; height: 20px; }
`;

const TripTitle = styled.h1`
  margin: 0;
  height: 78px;
  line-height: 68px;
  text-align: center;
  font-size: 52px;
  font-weight: 600;
  color: #6aaab9;
`;

const TabList = styled.div`
  display: grid;
  grid-template-columns: repeat(4, 1fr);
  height: 66px;
`;

const Tab = styled.button<{ $active: boolean }>`
  height: 66px;
  font-size: 36px;
  font-weight: 500;
  line-height: 52px;
  color: ${(p) => (p.$active ? '#a5a8a9' : '#5d6162')};
  border-bottom: 6px solid ${(p) => (p.$active ? '#9fa2a4' : 'transparent')};
  cursor: pointer;
`;

/* ---------- summary ---------- */

const Summary = styled.main`
  padding: 32px 21px 8px 27px;
  background: #48494b;
`;

const Row = styled.div<{ $cols: string; $gap?: number }>`
  display: grid;
  grid-template-columns: ${(p) => p.$cols};
  column-gap: 21px;
  margin-bottom: ${(p) => p.$gap ?? 36}px;
`;

const Cell = styled.div`
  display: flex;
  flex-direction: column;
  min-width: 0;
  height: 150px;
  padding-left: 9px;
  border-bottom: 3px solid #838384;
`;

const FieldLabel = styled.label`
  height: 54px;
  line-height: 56px;
  font-size: 42px;
  font-weight: 600;
  color: #8fa8ac;
  white-space: nowrap;
`;

const valueText = `
  display: block;
  width: 100%;
  height: 84px;
  line-height: 84px;
  white-space: nowrap;
`;

const FieldInput = styled.input<{ $echo?: boolean }>`
  && {
    ${valueText}
    font-size: ${(p) => (p.$echo ? 73 : 75)}px;
    color: #e8e6dc;
    text-shadow: ${(p) => (p.$echo ? '30px 0 0 rgba(0, 0, 0, 0.03)' : 'none')};
    outline: none;
  }
`;

const FieldOutput = styled.output<{ $small?: boolean }>`
  ${valueText}
  font-size: ${(p) => (p.$small ? 68 : 75)}px;
  padding-top: ${(p) => (p.$small ? 6 : 0)}px;
  color: #97aabf;
`;

const SectionTitle = styled.h2`
  margin: 0 0 14px;
  padding-left: 9px;
  height: 60px;
  line-height: 62px;
  font-size: 47px;
  font-weight: 600;
  color: #31a9bb;
`;

type FieldProps = { id: string; label: string; value: string; editable?: boolean; echo?: boolean; small?: boolean };

const Field = ({ id, label, value, editable, echo, small }: FieldProps) => (
  <Cell>
    <FieldLabel htmlFor={id}>{label}</FieldLabel>
    {editable ? <FieldInput id={id} type="text" defaultValue={value} $echo={echo} /> : <FieldOutput id={id} $small={small}>{value}</FieldOutput>}
  </Cell>
);

const THIRDS = 'repeat(3, minmax(0, 1fr))';
const WIDE = 'minmax(0, 2fr) minmax(0, 1fr)';
const HALVES = 'repeat(2, minmax(0, 1fr))';
const TABS = ['タイムライン', '写真', '出費／経費', 'サマリー'];

export default function App() {
  const [tab, setTab] = useState('サマリー');
  return (
    <>
      <GlobalStyle />
      <RouteMap />
      <SheetHeader>
        <HandleRow>
          <ChevronButton type="button" aria-label="下げる" $side="left">
            <svg viewBox="0 0 32 20"><path d="M2 2L16 16L30 2" fill="none" stroke="currentColor" strokeWidth="4" /></svg>
          </ChevronButton>
          <Handle type="button" aria-label="パネルを移動" />
          <ChevronButton type="button" aria-label="上げる" $side="right">
            <svg viewBox="0 0 32 20"><path d="M2 18L16 4L30 18" fill="none" stroke="currentColor" strokeWidth="4" /></svg>
          </ChevronButton>
        </HandleRow>
        <TripTitle>2025四国 Day1</TripTitle>
        <TabList role="tablist">
          {TABS.map((name) => (
            <Tab key={name} type="button" role="tab" aria-selected={tab === name} $active={tab === name} onClick={() => setTab(name)}>
              {name}
            </Tab>
          ))}
        </TabList>
      </SheetHeader>
      <Summary>
        <Row $cols={THIRDS}>
          <Field id="odo-start" label="ODO(出発時)" value="83,737.0" editable />
          <Field id="odo-end" label="ODO(終了時)" value="84,462.0" editable />
          <Field id="trip" label="TRIP" value="725.0" />
        </Row>
        <Row $cols={WIDE}>
          <Field id="start-at" label="出発日時" value="2025/04/28 5:41" editable echo />
          <Field id="duration" label="所要時間" value="14h 31m" />
        </Row>
        <Row $cols={WIDE} $gap={42}>
          <Field id="end-at" label="終了日時" value="2025/04/28 20:12" editable echo />
          <Field id="riding" label="乗車時間" value="11h 47m" />
        </Row>
        <Row $cols={THIRDS}>
          <Field id="max-speed" label="最高速度" value="128.2 km/h" small />
          <Field id="avg-speed" label="平均速度" value="61.4 km/h" />
          <Field id="max-alt" label="最高高度" value="848.3 m" />
        </Row>
        <SectionTitle>給油記録</SectionTitle>
        <Row $cols={HALVES} $gap={0}>
          <Field id="fuel" label="給油量" value="37.3" />
          <Field id="economy" label="燃費" value="19.9" />
        </Row>
      </Summary>
    </>
  );
}
